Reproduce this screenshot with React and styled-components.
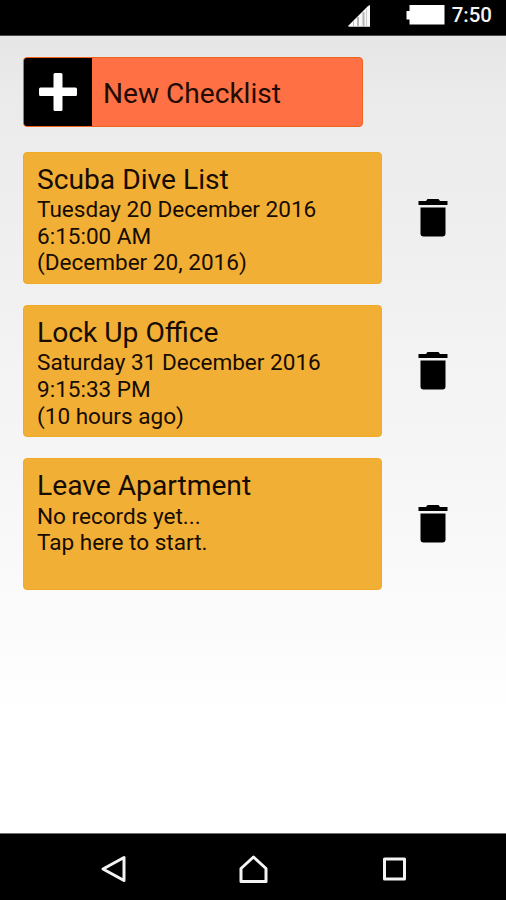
import styled, { createGlobalStyle } from "styled-components";

const GlobalStyle = createGlobalStyle`
  * {
    box-sizing: border-box;
  }
  body {
    margin: 0;
    font-family: Roboto, "Liberation Sans", sans-serif;
    color: #160c02;
  }
`;

const Screen = styled.div`
  display: flex;
  flex-direction: column;
  height: 900px;
  width: 506px;
  overflow: hidden;
`;

const StatusBar = styled.header`
  display: flex;
  justify-content: flex-end;
  height: 36px;
  flex-shrink: 0;
  padding-right: 14px;
  background-color: #000;
  border-bottom: 1px solid #4a4a4a;
`;

const Clock = styled.span`
  margin: 3px 0 0 7px;
  font-size: 20.5px;
  line-height: 24px;
  font-weight: 500;
  color: #f4f4f4;
`;

const Main = styled.main`
  flex: 1;
  padding: 20.5px 0 0 23px;
  background: linear-gradient(
    #e6e6e6 0%,
    #ebebeb 8%,
    #efefef 25%,
    #f9f9f9 66%,
    #fff 86%
  );
`;

const NewButton = styled.button`
  display: flex;
  align-items: center;
  width: 340px;
  height: 70.5px;
  padding: 0;
  border: 1px solid #f0641e;
  border-radius: 4px;
  overflow: hidden;
  background-color: #ff7144;
  color: #210b03;
  font-family: inherit;
  font-size: 28.1px;
  cursor: pointer;
`;

const PlusBox = styled.span`
  display: flex;
  align-items: center;
  justify-content: center;
  width: 68px;
  height: 100%;
  margin-right: 11px;
  background-color: #000;
`;

const ButtonLabel = styled.span`
  padding-top: 3px;
`;

const List = styled.ul`
  display: flex;
  flex-direction: column;
  gap: 21.4px;
  margin: 24.7px 0 0;
  padding: 0;
  list-style: none;
`;

const Row = styled.li`
  display: flex;
  align-items: center;
`;

const Card = styled.div`
  width: 358.5px;
  height: 132px;
  padding: 10px 14px 0 13px;
  border: 1px solid #f0aa26;
  border-radius: 4px;
  background-color: #f2af35;
  cursor: pointer;
`;

const Title = styled.h2`
  margin: 0;
  font-size: 28.2px;
  line-height: 33.4px;
  font-weight: 400;
`;

const Line = styled.p`
  margin: 0;
  font-size: 22.55px;
  line-height: 26.7px;

  h2 + & {
    margin-top: 0.8px;
  }
`;

const DeleteButton = styled.button`
  display: flex;
  margin-left: 35.5px;
  padding: 0;
  border: none;
  background: none;
  cursor: pointer;
`;

const NavBar = styled.nav`
  display: flex;
  align-items: center;
  justify-content: space-around;
  height: 67px;
  flex-shrink: 0;
  padding: 4px 42px 0 43px;
  border-top: 1px solid #707070;
  background-color: #000;
`;

const checklists = [
  {
    title: "Scuba Dive List",
    lines: ["Tuesday 20 December 2016", "6:15:00 AM", "(December 20, 2016)"],
  },
  {
    title: "Lock Up Office",
    lines: ["Saturday 31 December 2016", "9:15:33 PM", "(10 hours ago)"],
  },
  {
    title: "Leave Apartment",
    lines: ["No records yet...", "Tap here to start."],
  },
];

function StatusIcons() {
  return (
    <svg width="97" height="35" viewBox="0 0 97 35">
      <path d="M0.500 26.700V25.500L20 6L22 5V26.700Z" fill="#f8f8f8" />
      <path d="M5.500 21.500V26.500" stroke="#bbb" strokeWidth="1" />
      <path d="M10 17V26.500M15.500 12V26.500" stroke="#b4b4b4" strokeWidth="2" />
      <path d="M18.500 9V26.500" stroke="#ccc" strokeWidth="1" />
      <path d="M61.500 5H96.500V24.500H61.500V19.500H58.500V11H61.500Z" fill="#fff" />
    </svg>
  );
}

function PlusIcon() {
  return (
    <svg width="38" height="38" viewBox="0 0 38 38">
      <path
        d="M16 0H22Q23.500 0 23.500 1.500V14.500H36.500Q38 14.500 38 16V21.500Q38 23 36.500 23H23.500V36.500Q23.500 38 22 38H16Q14.500 38 14.500 36.500V23H1.500Q0 23 0 21.500V16Q0 14.500 1.500 14.500H14.500V1.500Q14.500 0 16 0Z"
        fill="#fff"
      />
    </svg>
  );
}

function TrashIcon() {
  return (
    <svg width="32" height="40" viewBox="0 0 32 40">
      <path
        d="M1.500 3H9L10.500 1H21.500L23 3H30.500V7H1.500ZM3.500 9.500H28.500V35.500Q28.500 38.500 25.500 38.500H6.500Q3.500 38.500 3.500 35.500Z"
        fill="#000"
      />
    </svg>
  );
}

function NavIcon({ d }) {
  return (
    <svg width="32" height="32" viewBox="0 0 32 32">
      <path
        d={d}
        fill="none"
        stroke="#f4f4f4"
        strokeWidth="3"
        strokeLinejoin="round"
      />
    </svg>
  );
}

function App() {
  return (
    <>
      <GlobalStyle />
      <Screen>
        <StatusBar>
          <StatusIcons />
          <Clock>7:50</Clock>
        </StatusBar>
        <Main>
          <NewButton>
            <PlusBox>
              <PlusIcon />
            </PlusBox>
            <ButtonLabel>New Checklist</ButtonLabel>
          </NewButton>
          <List>
            {checklists.map((item) => (
              <Row key={item.title}>
                <Card>
                  <Title>{item.title}</Title>
                  {item.lines.map((line) => (
                    <Line key={line}>{line}</Line>
                  ))}
                </Card>
                <DeleteButton aria-label="Delete">
                  <TrashIcon />
                </DeleteButton>
              </Row>
            ))}
          </List>
        </Main>
        <NavBar>
          <NavIcon d="M6 16L27 4.500V27.500Z" />
          <NavIcon d="M16.500 4L29 15.500V28.500H4V15.500Z" />
          <NavIcon d="M6.500 6H26.500V26H6.500Z" />
        </NavBar>
      </Screen>
    </>
  );
}
export default App;
